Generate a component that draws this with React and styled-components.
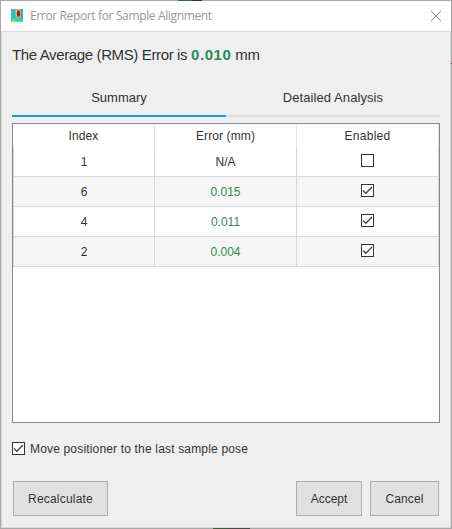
import React from 'react';
import styled, { createGlobalStyle } from 'styled-components';

const GlobalStyle = createGlobalStyle`
  *, *::before, *::after { box-sizing: border-box; }
  body { margin: 0; background: #a6a6a6; overflow: hidden; }
`;

const Window = styled.div`
  position: relative;
  display: flex;
  flex-direction: column;
  width: 452px;
  height: 529px;
  border: 1px solid #a8a8a8;
  background: #efefef;
  color: #333;
  font: 13px/16px "Liberation Sans", Arial, sans-serif;
  white-space: nowrap;
`;

const Backdrop = styled.span`
  position: absolute;
  left: ${(p) => p.$x}px;
  top: ${(p) => p.$y}px;
  width: ${(p) => p.$w}px;
  height: 1px;
  background: ${(p) => p.$fill};
`;

const TitleBar = styled.header`
  display: flex;
  align-items: center;
  height: 30px;
  flex: none;
  padding: 0 9px 0 10px;
  background: #fff;
`;

const Title = styled.span`
  flex: 1;
  margin-left: 7px;
  padding-bottom: 1px;
  color: #999;
  font: 12px/16px "Open Sans", "Noto Sans", sans-serif;
  letter-spacing: -0.36px;
`;

const Body = styled.main`
  display: flex;
  flex-direction: column;
  flex: 1;
  border: 1px solid #dadada;
  padding: 0 10px;
`;

const Heading = styled.h1`
  margin: 13px 0 0;
  font-size: 15px;
  font-weight: 400;
  line-height: 20px;
  letter-spacing: -0.37px;
`;

const ErrorValue = styled.b`
  color: #2e8b57;
  letter-spacing: 0.6px;
`;

const Tabs = styled.nav`
  display: grid;
  grid-template-columns: 214px 214px;
  margin-top: 20px;
`;

const Tab = styled.div`
  height: 32px;
  padding-top: 5px;
  text-align: center;
  font-size: 13px;
  letter-spacing: ${(p) => p.$spacing}px;
  border-bottom: 2px solid ${(p) => (p.$active ? '#1e90ff' : '#dcdcdc')};
`;

const Table = styled.section`
  width: 428px;
  height: 300px;
  margin-top: 6px;
  border: 1px solid #828790;
  background: #fff;
  font-size: 12px;
`;

const HeaderRow = styled.div`
  display: grid;
  grid-template-columns: 142px 142px 142px;
  height: 23px;
`;

const HeaderCell = styled.div`
  padding-top: 4px;
  border-right: 1px solid #e5e5e5;
  text-align: center;
  letter-spacing: ${(p) => p.$spacing}px;
`;

const Row = styled.div`
  display: grid;
  grid-template-columns: 141px 142px 142px;
  height: 30px;
  border-left: 1px solid #d8d8d8;
  background: ${(p) => (p.$shaded ? '#f5f5f5' : '#fff')};
`;

const Cell = styled.div`
  display: flex;
  justify-content: center;
  padding-top: 7px;
  border-right: 1px solid #d8d8d8;
  border-bottom: 1px solid #d8d8d8;
  color: ${(p) => (p.$good ? '#2e8b57' : '#333')};
`;

const BoxIcon = styled.svg`
  display: block;
  flex: none;
  width: 13px;
  height: 13px;
`;

const Option = styled.label`
  display: flex;
  align-items: center;
  gap: 5px;
  height: 17px;
  margin-top: 17px;
  font-size: 12px;
  letter-spacing: 0.17px;
`;

const Actions = styled.footer`
  display: flex;
  gap: 8px;
  margin: 24px 1px 0;
`;

const Button = styled.button`
  width: ${(p) => p.$width}px;
  height: 35px;
  padding: 0;
  border: 1px solid #adadad;
  border-radius: 0;
  background: #e1e1e1;
  color: #333;
  font: 12px/16px "Liberation Sans", Arial, sans-serif;
  letter-spacing: ${(p) => p.$spacing}px;
`;

const Spacer = styled.span`
  flex: 1;
`;

const HeatMap = styled.svg`
  display: block;
  flex: none;
  margin-bottom: 1px;
`;

function AppIcon() {
  return (
    <HeatMap width="12" height="13" viewBox="0 0 12 13">
      <defs>
        <linearGradient id="field" x1="0" y1="0" x2="1" y2="0">
          <stop offset="0" stopColor="#3cc4dc" />
          <stop offset=".25" stopColor="#22b4d8" />
          <stop offset=".45" stopColor="#7fdc90" />
          <stop offset=".75" stopColor="#7fdc90" />
          <stop offset=".88" stopColor="#2a98cc" />
          <stop offset="1" stopColor="#3cc0cc" />
        </linearGradient>
        <linearGradient id="floor" x1="0" y1="0" x2="0" y2="1">
          <stop offset=".5" stopColor="#20c4c4" stopOpacity="0" />
          <stop offset=".75" stopColor="#20c4c4" stopOpacity=".85" />
          <stop offset="1" stopColor="#66d890" />
        </linearGradient>
        <radialGradient id="hot">
          <stop offset="0" stopColor="#781010" />
          <stop offset=".45" stopColor="#b82014" />
          <stop offset=".7" stopColor="#f09030" />
          <stop offset="1" stopColor="#e0e050" stopOpacity="0" />
        </radialGradient>
      </defs>
      <rect width="12" height="13" fill="url(#field)" />
      <rect width="12" height="13" fill="url(#floor)" />
      <path d="M0 13 2.8 9 5 13Z" fill="#c0dc50" opacity=".75" />
      <ellipse cx="7.5" cy="4.6" rx="2.7" ry="5.4" fill="url(#hot)" />
    </HeatMap>
  );
}

function CheckBox({ checked }) {
  return (
    <BoxIcon viewBox="0 0 13 13">
      <rect x=".5" y=".5" width="12" height="12" fill="#fff" stroke="#333" />
      {checked && <path d="M2 6.4 4.9 9.2 11 3.1" fill="none" stroke="#444" strokeWidth="1.35" />}
    </BoxIcon>
  );
}

const rows = [
  { index: '1', error: 'N/A', enabled: false },
  { index: '6', error: '0.015', enabled: true },
  { index: '4', error: '0.011', enabled: true },
  { index: '2', error: '0.004', enabled: true },
];

export default function App() {
  return (
    <>
      <GlobalStyle />
      <Window>
        <Backdrop $x={177} $y={-1} $w={24} $fill="linear-gradient(90deg, #3f6b3c 55%, #3a2c48 60%)" />
        <Backdrop $x={212} $y={527} $w={37} $fill="linear-gradient(90deg, #356038 35%, #484848 45%)" />
        <Backdrop $x={450} $y={62} $w={1} $fill="#6e3048" />
        <TitleBar>
          <AppIcon />
          <Title>Error Report for Sample Alignment</Title>
          <svg width="12" height="12" viewBox="0 0 12 12">
            <path d="M1 1 11 11M11 1 1 11" stroke="#8c8c8c" strokeWidth="1" />
          </svg>
        </TitleBar>
        <Body>
          <Heading>
            The Average (RMS) Error is <ErrorValue>0.010</ErrorValue> mm
          </Heading>
          <Tabs>
            <Tab $active $spacing={0}>Summary</Tab>
            <Tab $spacing={0.08}>Detailed Analysis</Tab>
          </Tabs>
          <Table>
            <HeaderRow>
              <HeaderCell $spacing={0.1}>Index</HeaderCell>
              <HeaderCell $spacing={0.1}>Error (mm)</HeaderCell>
              <HeaderCell $spacing={0.3}>Enabled</HeaderCell>
            </HeaderRow>
            {rows.map((row, i) => (
              <Row key={row.index} $shaded={i % 2 === 1}>
                <Cell>{row.index}</Cell>
                <Cell $good={row.enabled}>{row.error}</Cell>
                <Cell><CheckBox checked={row.enabled} /></Cell>
              </Row>
            ))}
          </Table>
          <Option>
            <CheckBox checked />
            <span>Move positioner to the last sample pose</span>
          </Option>
          <Actions>
            <Button $width={95} $spacing={0.2}>Recalculate</Button>
            <Spacer />
            <Button $width={66} $spacing={0}>Accept</Button>
            <Button $width={69} $spacing={0.1}>Cancel</Button>
          </Actions>
        </Body>
      </Window>
    </>
  );
}
